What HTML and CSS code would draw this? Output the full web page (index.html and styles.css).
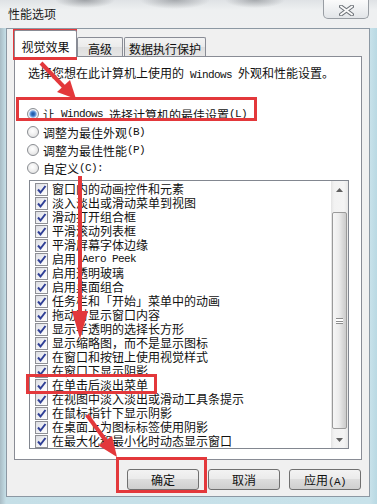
FILE: index.html
```html
<!DOCTYPE html>
<html lang="zh-CN">
<head>
<meta charset="utf-8">
<title>性能选项</title>
<link rel="stylesheet" href="styles.css">
</head>
<body>
<div class="window">
  <div class="titlebar">
    <span class="title">性能选项</span>
    <div class="close">
      <svg width="15" height="11" viewBox="0 0 15 11"><path d="M2 1.5 L13 9.5 M13 1.5 L2 9.5" stroke="#6f747a" stroke-width="4" stroke-linecap="round"/><path d="M2 1.5 L13 9.5 M13 1.5 L2 9.5" stroke="#fafafa" stroke-width="2" stroke-linecap="round"/></svg>
    </div>
  </div>
  <div class="client">
    <div class="tabs">
      <div class="tab active">视觉效果</div>
      <div class="tab t-adv">高级</div>
      <div class="tab t-dep">数据执行保护</div>
    </div>
    <div class="panel">
      <p class="intro">选择您想在此计算机上使用的<span class="lat"> Windows </span>外观和性能设置。</p>
      <div class="radios">
        <div class="radio-row"><span class="radio on"></span>让<span class="lat"> Windows </span>选择计算机的最佳设置<span class="lat">(L)</span></div>
        <div class="radio-row"><span class="radio"></span>调整为最佳外观<span class="lat">(B)</span></div>
        <div class="radio-row"><span class="radio"></span>调整为最佳性能<span class="lat">(P)</span></div>
        <div class="radio-row"><span class="radio"></span>自定义<span class="lat">(C):</span></div>
      </div>
      <div class="listbox">
        <ul class="items">
          <li><span class="cb"><svg width="11" height="11" viewBox="0 0 11 11"><path d="M2 5.5 L4.5 8.5 L9.5 2" fill="none" stroke="#2f3f96" stroke-width="2"/></svg></span>窗口内的动画控件和元素</li>
          <li><span class="cb"><svg width="11" height="11" viewBox="0 0 11 11"><path d="M2 5.5 L4.5 8.5 L9.5 2" fill="none" stroke="#2f3f96" stroke-width="2"/></svg></span>淡入淡出或滑动菜单到视图</li>
          <li><span class="cb"><svg width="11" height="11" viewBox="0 0 11 11"><path d="M2 5.5 L4.5 8.5 L9.5 2" fill="none" stroke="#2f3f96" stroke-width="2"/></svg></span>滑动打开组合框</li>
          <li><span class="cb"><svg width="11" height="11" viewBox="0 0 11 11"><path d="M2 5.5 L4.5 8.5 L9.5 2" fill="none" stroke="#2f3f96" stroke-width="2"/></svg></span>平滑滚动列表框</li>
          <li><span class="cb"><svg width="11" height="11" viewBox="0 0 11 11"><path d="M2 5.5 L4.5 8.5 L9.5 2" fill="none" stroke="#2f3f96" stroke-width="2"/></svg></span>平滑屏幕字体边缘</li>
          <li><span class="cb"><svg width="11" height="11" viewBox="0 0 11 11"><path d="M2 5.5 L4.5 8.5 L9.5 2" fill="none" stroke="#2f3f96" stroke-width="2"/></svg></span>启用<span class="lat"> Aero Peek</span></li>
          <li><span class="cb"><svg width="11" height="11" viewBox="0 0 11 11"><path d="M2 5.5 L4.5 8.5 L9.5 2" fill="none" stroke="#2f3f96" stroke-width="2"/></svg></span>启用透明玻璃</li>
          <li><span class="cb"><svg width="11" height="11" viewBox="0 0 11 11"><path d="M2 5.5 L4.5 8.5 L9.5 2" fill="none" stroke="#2f3f96" stroke-width="2"/></svg></span>启用桌面组合</li>
          <li><span class="cb"><svg width="11" height="11" viewBox="0 0 11 11"><path d="M2 5.5 L4.5 8.5 L9.5 2" fill="none" stroke="#2f3f96" stroke-width="2"/></svg></span>任务栏和「开始」菜单中的动画</li>
          <li><span class="cb"><svg width="11" height="11" viewBox="0 0 11 11"><path d="M2 5.5 L4.5 8.5 L9.5 2" fill="none" stroke="#2f3f96" stroke-width="2"/></svg></span>拖动时显示窗口内容</li>
          <li><span class="cb"><svg width="11" height="11" viewBox="0 0 11 11"><path d="M2 5.5 L4.5 8.5 L9.5 2" fill="none" stroke="#2f3f96" stroke-width="2"/></svg></span>显示半透明的选择长方形</li>
          <li><span class="cb"><svg width="11" height="11" viewBox="0 0 11 11"><path d="M2 5.5 L4.5 8.5 L9.5 2" fill="none" stroke="#2f3f96" stroke-width="2"/></svg></span>显示缩略图，而不是显示图标</li>
          <li><span class="cb"><svg width="11" height="11" viewBox="0 0 11 11"><path d="M2 5.5 L4.5 8.5 L9.5 2" fill="none" stroke="#2f3f96" stroke-width="2"/></svg></span>在窗口和按钮上使用视觉样式</li>
          <li><span class="cb"><svg width="11" height="11" viewBox="0 0 11 11"><path d="M2 5.5 L4.5 8.5 L9.5 2" fill="none" stroke="#2f3f96" stroke-width="2"/></svg></span>在窗口下显示阴影</li>
          <li><span class="cb"><svg width="11" height="11" viewBox="0 0 11 11"><path d="M2 5.5 L4.5 8.5 L9.5 2" fill="none" stroke="#2f3f96" stroke-width="2"/></svg></span>在单击后淡出菜单</li>
          <li><span class="cb"><svg width="11" height="11" viewBox="0 0 11 11"><path d="M2 5.5 L4.5 8.5 L9.5 2" fill="none" stroke="#2f3f96" stroke-width="2"/></svg></span>在视图中淡入淡出或滑动工具条提示</li>
          <li><span class="cb"><svg width="11" height="11" viewBox="0 0 11 11"><path d="M2 5.5 L4.5 8.5 L9.5 2" fill="none" stroke="#2f3f96" stroke-width="2"/></svg></span>在鼠标指针下显示阴影</li>
          <li><span class="cb"><svg width="11" height="11" viewBox="0 0 11 11"><path d="M2 5.5 L4.5 8.5 L9.5 2" fill="none" stroke="#2f3f96" stroke-width="2"/></svg></span>在桌面上为图标标签使用阴影</li>
          <li><span class="cb"><svg width="11" height="11" viewBox="0 0 11 11"><path d="M2 5.5 L4.5 8.5 L9.5 2" fill="none" stroke="#2f3f96" stroke-width="2"/></svg></span>在最大化和最小化时动态显示窗口</li>
        </ul>
        <div class="scrollbar">
          <div class="sb-btn"><svg width="7" height="4" viewBox="0 0 7 4"><path d="M0 4 L3.5 0 L7 4 Z" fill="#606060"/></svg></div>
          <div class="sb-track">
            <div class="sb-thumb"><span class="grip"></span></div>
          </div>
          <div class="sb-btn"><svg width="7" height="4" viewBox="0 0 7 4"><path d="M0 0 L7 0 L3.5 4 Z" fill="#606060"/></svg></div>
        </div>
      </div>
    </div>
    <div class="buttons">
      <button class="btn">确定</button>
      <button class="btn">取消</button>
      <button class="btn">应用<span class="lat">(A)</span></button>
    </div>
  </div>
  <svg class="annot" width="377" height="504" viewBox="0 0 377 504">
    <g fill="none" stroke="#e3383b" stroke-width="3">
      <rect x="14.5" y="30.5" width="61" height="28"/>
      <rect x="17.5" y="98.5" width="238" height="21"/>
      <rect x="27.5" y="375.5" width="128" height="17"/>
      <rect x="117.5" y="458.5" width="88" height="33"/>
    </g>
    <g stroke="#e3383b" stroke-width="4" fill="#e3383b">
      <line x1="41" y1="63" x2="64" y2="87"/>
      <polygon points="76,99 57,92 70,80" stroke="none"/>
      <line x1="80" y1="176" x2="80" y2="315"/>
      <polygon points="80,339 72,311 88,311" stroke="none"/>
      <line x1="87" y1="415" x2="106" y2="441"/>
      <polygon points="117,457 98.5,445.5 112,436" stroke="none"/>
    </g>
  </svg>
</div>
</body>
</html>
```
FILE: styles.css
```css
* {
  box-sizing: border-box;
}

html,
body {
  margin: 0;
  padding: 0;
}

body {
  width: 377px;
  height: 504px;
  overflow: hidden;
  font-family: "Noto Sans CJK SC", "Noto Sans", sans-serif;
  font-size: 12px;
  color: #111;
}

.lat {
  font-family: "Liberation Mono", "DejaVu Sans Mono", monospace;
  font-size: 11px;
  letter-spacing: -0.6px;
  white-space: pre;
}

.window {
  position: relative;
  width: 377px;
  height: 504px;
  display: flex;
  flex-direction: column;
  background:
    linear-gradient(90deg, #a9bcc5 0, #c5dfe7 6px, #c8e2ea 370px, #b9d9e3 377px);
}

.titlebar {
  height: 28px;
  flex: none;
  display: flex;
  justify-content: space-between;
  align-items: flex-start;
  background:
    radial-gradient(ellipse 30px 8px at 85px 0, rgba(80, 84, 90, 0.45), rgba(80, 84, 90, 0)),
    radial-gradient(ellipse 35px 9px at 175px 0, rgba(80, 84, 90, 0.4), rgba(80, 84, 90, 0)),
    radial-gradient(ellipse 30px 8px at 255px 0, rgba(80, 84, 90, 0.4), rgba(80, 84, 90, 0)),
    linear-gradient(#dfe2e5, #eef0f1 10px, #eff0f1);
}

.title {
  padding-left: 8px;
  line-height: 28px;
  color: #1a1a1a;
}

.close {
  width: 46px;
  height: 19px;
  margin-right: 8px;
  border: 1px solid #989da3;
  border-top: 0;
  border-radius: 0 0 5px 5px;
  background: linear-gradient(#fbfbfb, #eceef0 60%, #e2e5e8);
  display: flex;
  align-items: center;
  justify-content: center;
  padding-top: 2px;
}

.client {
  height: 469px;
  margin: 0 7px 7px 6px;
  border: 1px solid #8c98a3;
  background: #f0f0f0;
  display: flex;
  flex-direction: column;
}

.tabs {
  height: 27px;
  flex: none;
  display: flex;
  align-items: flex-end;
  padding-left: 7px;
}

.tab {
  height: 19px;
  padding-top: 4px;
  line-height: 14px;
  text-align: center;
  white-space: nowrap;
  border: 1px solid #898c95;
  border-bottom: 0;
  border-radius: 2px 2px 0 0;
  background: linear-gradient(#f3f3f3, #ebebeb 50%, #dedede 51%, #e6e6e6);
}

.tab.active {
  width: 63px;
  height: 27px;
  padding-top: 9px;
  margin-bottom: -1px;
  position: relative;
  z-index: 1;
  background: #ffffff;
}

.t-adv {
  width: 46px;
}

.t-dep {
  width: 82px;
  margin-left: 1px;
}

.panel {
  height: 404px;
  margin: 0 7px;
  border: 1px solid #898c95;
  background: #ffffff;
}

.intro {
  margin: 0;
  padding: 9px 0 0 13px;
  line-height: 14px;
  white-space: nowrap;
}

.radios {
  margin-top: 23px;
  padding-left: 12px;
}

.radio-row {
  display: flex;
  align-items: center;
  height: 18px;
  white-space: nowrap;
}

.radio {
  width: 12px;
  height: 12px;
  margin-right: 4px;
  border-radius: 50%;
  border: 1px solid #8a8d92;
  background: radial-gradient(circle at 45% 40%, #ffffff 0, #f2f2f2 40%, #d8d8d8 100%);
  flex: none;
}

.radio.on {
  background: radial-gradient(circle at 50% 50%, #1a4f9a 0, #3a78c8 2px, #8db4e6 3.3px, #eef2f7 4.2px, #e2e2e2 100%);
}

.listbox {
  height: 269px;
  margin: 3px 12px 0 14px;
  border: 1px solid #828790;
  background: #ffffff;
  display: flex;
}

.items {
  flex: 1;
  margin: 0;
  padding: 1px 0 0 5px;
  list-style: none;
}

.items li {
  display: flex;
  align-items: center;
  height: 14px;
  line-height: 14px;
  white-space: nowrap;
}

.cb {
  width: 13px;
  height: 13px;
  margin-right: 4px;
  flex: none;
  border: 1px solid #8e8f95;
  background: linear-gradient(135deg, #dcdde2, #f6f6f8 70%, #ffffff);
  display: flex;
  align-items: center;
  justify-content: center;
}

.cb svg {
  display: block;
}

.scrollbar {
  width: 17px;
  flex: none;
  display: flex;
  flex-direction: column;
  background: linear-gradient(90deg, #e3e3e3, #f2f2f2 3px, #f4f4f4 13px, #e6e6e6);
}

.sb-btn {
  height: 17px;
  flex: none;
  display: flex;
  align-items: center;
  justify-content: center;
}

.sb-track {
  flex: 1;
  padding: 14px 1px 0 1px;
}

.sb-thumb {
  height: 217px;
  border: 1px solid #9a9a9a;
  border-radius: 2px;
  background: linear-gradient(90deg, #f6f6f6, #ececec 45%, #dcdcdc 70%, #cbcbcb);
  display: flex;
  align-items: center;
  justify-content: center;
}

.grip {
  width: 7px;
  height: 6px;
  border-top: 1px solid #8c8c8c;
  border-bottom: 1px solid #8c8c8c;
  background: linear-gradient(#ffffff 0 2px, #8c8c8c 2px 3px, #ffffff 3px);
}

.buttons {
  display: flex;
  justify-content: flex-end;
  gap: 9px;
  margin-top: 9px;
  padding-right: 8px;
}

.btn {
  width: 72px;
  height: 21px;
  padding: 0;
  border: 1px solid #707070;
  border-radius: 3px;
  background: linear-gradient(#f3f3f3, #ebebeb 45%, #dddddd 50%, #cfcfcf);
  font: inherit;
  line-height: 19px;
  color: #111;
}

.annot {
  position: absolute;
  left: 0;
  top: 0;
  pointer-events: none;
}
```
